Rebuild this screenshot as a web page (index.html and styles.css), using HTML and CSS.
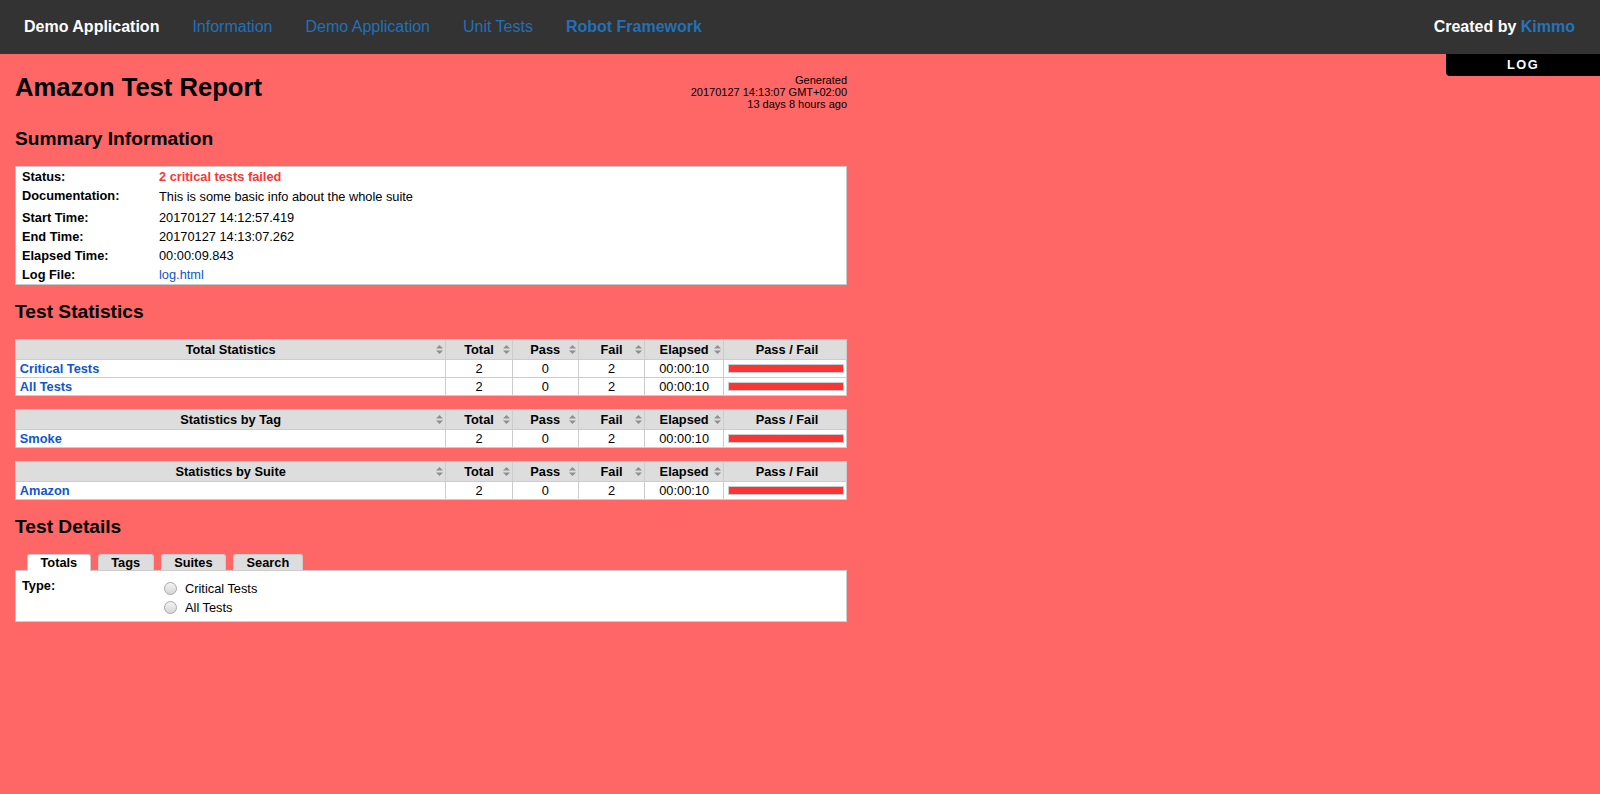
FILE: index.html
```html
<!DOCTYPE html>
<html>
<head>
<meta charset="utf-8">
<title>Amazon Test Report</title>
<link rel="stylesheet" href="styles.css">
</head>
<body>
<nav class="navbar">
  <div class="nav-left">
    <a class="brand" href="#">Demo Application</a>
    <a class="nav-link" href="#">Information</a>
    <a class="nav-link" href="#">Demo Application</a>
    <a class="nav-link" href="#">Unit Tests</a>
    <a class="nav-link active" href="#">Robot Framework</a>
  </div>
  <div class="nav-right">Created by <a href="#">Kimmo</a></div>
</nav>
<div class="log-link"><a href="#">LOG</a></div>
<main class="report">
  <div class="header">
    <h1>Amazon Test Report</h1>
    <div class="generated">Generated<br>20170127 14:13:07 GMT+02:00<br>13 days 8 hours ago</div>
  </div>

  <h2>Summary Information</h2>
  <table class="details">
    <tr><th>Status:</th><td class="fail">2 critical tests failed</td></tr>
    <tr class="doc-row"><th>Documentation:</th><td>This is some basic info about the whole suite</td></tr>
    <tr><th>Start Time:</th><td>20170127 14:12:57.419</td></tr>
    <tr><th>End Time:</th><td>20170127 14:13:07.262</td></tr>
    <tr><th>Elapsed Time:</th><td>00:00:09.843</td></tr>
    <tr><th>Log File:</th><td><a href="#">log.html</a></td></tr>
  </table>

  <h2>Test Statistics</h2>
  <table class="statistics">
    <tr>
      <th class="col-name">Total Statistics<svg class="sort" width="7" height="9" viewBox="0 0 7 9"><path d="M0 3.5 3.5 0 7 3.5Z M0 5.5 7 5.5 3.5 9Z"/></svg></th>
      <th class="col-stat">Total<svg class="sort" width="7" height="9" viewBox="0 0 7 9"><path d="M0 3.5 3.5 0 7 3.5Z M0 5.5 7 5.5 3.5 9Z"/></svg></th>
      <th class="col-stat">Pass<svg class="sort" width="7" height="9" viewBox="0 0 7 9"><path d="M0 3.5 3.5 0 7 3.5Z M0 5.5 7 5.5 3.5 9Z"/></svg></th>
      <th class="col-stat">Fail<svg class="sort" width="7" height="9" viewBox="0 0 7 9"><path d="M0 3.5 3.5 0 7 3.5Z M0 5.5 7 5.5 3.5 9Z"/></svg></th>
      <th class="col-elapsed">Elapsed<svg class="sort" width="7" height="9" viewBox="0 0 7 9"><path d="M0 3.5 3.5 0 7 3.5Z M0 5.5 7 5.5 3.5 9Z"/></svg></th>
      <th class="col-graph">Pass / Fail</th>
    </tr>
    <tr>
      <td class="name"><a href="#">Critical Tests</a></td>
      <td class="num">2</td><td class="num">0</td><td class="num">2</td><td class="num">00:00:10</td>
      <td class="graph-cell"><div class="graph"><div class="fail-bar"></div></div></td>
    </tr>
    <tr>
      <td class="name"><a href="#">All Tests</a></td>
      <td class="num">2</td><td class="num">0</td><td class="num">2</td><td class="num">00:00:10</td>
      <td class="graph-cell"><div class="graph"><div class="fail-bar"></div></div></td>
    </tr>
  </table>

  <table class="statistics">
    <tr>
      <th class="col-name">Statistics by Tag<svg class="sort" width="7" height="9" viewBox="0 0 7 9"><path d="M0 3.5 3.5 0 7 3.5Z M0 5.5 7 5.5 3.5 9Z"/></svg></th>
      <th class="col-stat">Total<svg class="sort" width="7" height="9" viewBox="0 0 7 9"><path d="M0 3.5 3.5 0 7 3.5Z M0 5.5 7 5.5 3.5 9Z"/></svg></th>
      <th class="col-stat">Pass<svg class="sort" width="7" height="9" viewBox="0 0 7 9"><path d="M0 3.5 3.5 0 7 3.5Z M0 5.5 7 5.5 3.5 9Z"/></svg></th>
      <th class="col-stat">Fail<svg class="sort" width="7" height="9" viewBox="0 0 7 9"><path d="M0 3.5 3.5 0 7 3.5Z M0 5.5 7 5.5 3.5 9Z"/></svg></th>
      <th class="col-elapsed">Elapsed<svg class="sort" width="7" height="9" viewBox="0 0 7 9"><path d="M0 3.5 3.5 0 7 3.5Z M0 5.5 7 5.5 3.5 9Z"/></svg></th>
      <th class="col-graph">Pass / Fail</th>
    </tr>
    <tr>
      <td class="name"><a href="#">Smoke</a></td>
      <td class="num">2</td><td class="num">0</td><td class="num">2</td><td class="num">00:00:10</td>
      <td class="graph-cell"><div class="graph"><div class="fail-bar"></div></div></td>
    </tr>
  </table>

  <table class="statistics">
    <tr>
      <th class="col-name">Statistics by Suite<svg class="sort" width="7" height="9" viewBox="0 0 7 9"><path d="M0 3.5 3.5 0 7 3.5Z M0 5.5 7 5.5 3.5 9Z"/></svg></th>
      <th class="col-stat">Total<svg class="sort" width="7" height="9" viewBox="0 0 7 9"><path d="M0 3.5 3.5 0 7 3.5Z M0 5.5 7 5.5 3.5 9Z"/></svg></th>
      <th class="col-stat">Pass<svg class="sort" width="7" height="9" viewBox="0 0 7 9"><path d="M0 3.5 3.5 0 7 3.5Z M0 5.5 7 5.5 3.5 9Z"/></svg></th>
      <th class="col-stat">Fail<svg class="sort" width="7" height="9" viewBox="0 0 7 9"><path d="M0 3.5 3.5 0 7 3.5Z M0 5.5 7 5.5 3.5 9Z"/></svg></th>
      <th class="col-elapsed">Elapsed<svg class="sort" width="7" height="9" viewBox="0 0 7 9"><path d="M0 3.5 3.5 0 7 3.5Z M0 5.5 7 5.5 3.5 9Z"/></svg></th>
      <th class="col-graph">Pass / Fail</th>
    </tr>
    <tr>
      <td class="name"><a href="#">Amazon</a></td>
      <td class="num">2</td><td class="num">0</td><td class="num">2</td><td class="num">00:00:10</td>
      <td class="graph-cell"><div class="graph"><div class="fail-bar"></div></div></td>
    </tr>
  </table>

  <h2>Test Details</h2>
  <ul class="tabs">
    <li class="tab active">Totals</li>
    <li class="tab">Tags</li>
    <li class="tab">Suites</li>
    <li class="tab">Search</li>
  </ul>
  <div class="detail-box">
    <table class="type-table">
      <tr>
        <th>Type:</th>
        <td>
          <label class="radio-row"><input type="radio" name="type" class="radio"><span>Critical Tests</span></label>
          <label class="radio-row"><input type="radio" name="type" class="radio"><span>All Tests</span></label>
        </td>
      </tr>
    </table>
  </div>
</main>
</body>
</html>
```

FILE: styles.css
```css
html, body {
  margin: 0;
  padding: 0;
}

body {
  background: #ff6666;
  font-family: "Liberation Sans", Arial, Helvetica, sans-serif;
  font-size: 12.8px;
  color: #000;
  min-height: 794px;
}

a {
  text-decoration: none;
  color: #1155cc;
}

/* ---------- navbar ---------- */
.navbar {
  height: 54px;
  background: #333333;
  display: flex;
  align-items: center;
  justify-content: space-between;
  padding: 0 25px 0 24px;
  box-sizing: border-box;
  font-size: 16px;
}

.nav-left {
  display: flex;
  align-items: center;
  gap: 33px;
}

.brand {
  color: #ffffff;
  font-weight: bold;
}

.nav-link {
  color: #2270b8;
}

.nav-link.active {
  font-weight: bold;
}

.nav-right {
  color: #ffffff;
  font-weight: bold;
}

.nav-right a {
  color: #2274bd;
}

/* ---------- log link ---------- */
.log-link {
  position: absolute;
  top: 54px;
  right: 0;
  width: 154px;
}

.log-link a {
  display: block;
  height: 22px;
  line-height: 22px;
  background: #000;
  color: #fff;
  font-weight: bold;
  letter-spacing: 1.5px;
  text-align: center;
  border-bottom-left-radius: 4px;
}

/* ---------- report ---------- */
.report {
  padding: 0 0 0 15px;
  width: 834px;
}

.header {
  margin-top: 19px;
  height: 39px;
  display: flex;
  justify-content: space-between;
  align-items: flex-start;
}

h1 {
  margin: 0;
  font-size: 25.6px;
  font-weight: bold;
  line-height: normal;
}

.generated {
  font-size: 11px;
  line-height: 12px;
  text-align: right;
  white-space: nowrap;
  margin: 1px 2px 0 0;
}

h2 {
  margin: 16px 0 16px;
  font-size: 19.2px;
  font-weight: bold;
  line-height: normal;
}

/* ---------- summary details ---------- */
.details {
  width: 832px;
  border-collapse: separate;
  border-spacing: 0;
  border: 1px solid #c8c8c8;
  background: #fff;
}

.details th {
  width: 137px;
  padding: 2px 0 2px 6px;
  text-align: left;
  vertical-align: top;
  font-weight: bold;
  line-height: 15px;
  white-space: nowrap;
}

.details td {
  padding: 2px 6px 2px 0;
  line-height: 15px;
  vertical-align: top;
}

.details .doc-row td {
  padding-top: 3px;
  padding-bottom: 3.5px;
}

.details .fail {
  color: #ff3333;
  font-weight: bold;
}

/* ---------- statistics ---------- */
.statistics {
  width: 832px;
  border-collapse: separate;
  border-spacing: 0;
  border-top: 1px solid #cccccc;
  border-left: 1px solid #cccccc;
  background: #fff;
  margin-bottom: 13px;
}

.statistics th,
.statistics td {
  border-right: 1px solid #cccccc;
  border-bottom: 1px solid #cccccc;
  padding: 0 3.84px;
  vertical-align: middle;
  line-height: 15px;
}

.statistics th {
  position: relative;
  background: #dddddd;
  height: 19px;
  font-weight: bold;
  text-align: center;
}

.statistics td {
  height: 17px;
}

.col-stat {
  width: 57.6px;
}

.col-elapsed {
  width: 70.4px;
}

.statistics th.col-graph {
  width: 118px;
  padding-right: 0;
}

.statistics td.graph-cell {
  padding-right: 0;
}

.sort {
  position: absolute;
  right: 2px;
  top: 50%;
  margin-top: -4.5px;
  fill: #8f8f8f;
}

.statistics td.name a {
  font-weight: bold;
}

.statistics td.num {
  text-align: center;
}

.graph {
  width: 114px;
  height: 7px;
  border: 1px solid #cccccc;
  background: #fff;
  display: flex;
}

.fail-bar {
  width: 100%;
  background: #ff3333;
}

/* ---------- test details ---------- */
.tabs {
  list-style: none;
  margin: 1px 0 0;
  padding: 0 0 0 12px;
  display: flex;
  align-items: flex-start;
  gap: 7px;
  height: 16px;
}

.tab {
  height: 15px;
  line-height: 15px;
  padding: 0 12.5px;
  border: 1px solid #cccccc;
  border-bottom: none;
  border-radius: 3px 3px 0 0;
  background: #dddddd;
  font-weight: bold;
  text-align: center;
}

.tab.active {
  background: #ffffff;
  height: 16px;
  position: relative;
  z-index: 1;
}

.detail-box {
  width: 832px;
  box-sizing: border-box;
  border: 1px solid #cccccc;
  background: #fff;
  padding: 7px 0 4px;
}

.type-table {
  border-collapse: collapse;
}

.type-table th {
  width: 137px;
  padding: 0 0 0 6px;
  text-align: left;
  vertical-align: top;
  font-weight: bold;
  line-height: 15px;
}

.type-table td {
  padding: 1px 0 0;
  vertical-align: top;
}

.radio-row {
  display: flex;
  align-items: center;
  height: 19px;
}

.radio {
  appearance: none;
  -webkit-appearance: none;
  width: 13px;
  height: 13px;
  margin: 0 8px 0 5px;
  border: 1px solid #a9a9a9;
  border-radius: 50%;
  background: linear-gradient(#f3f3f3, #d6d6d6);
  box-sizing: border-box;
}
```
